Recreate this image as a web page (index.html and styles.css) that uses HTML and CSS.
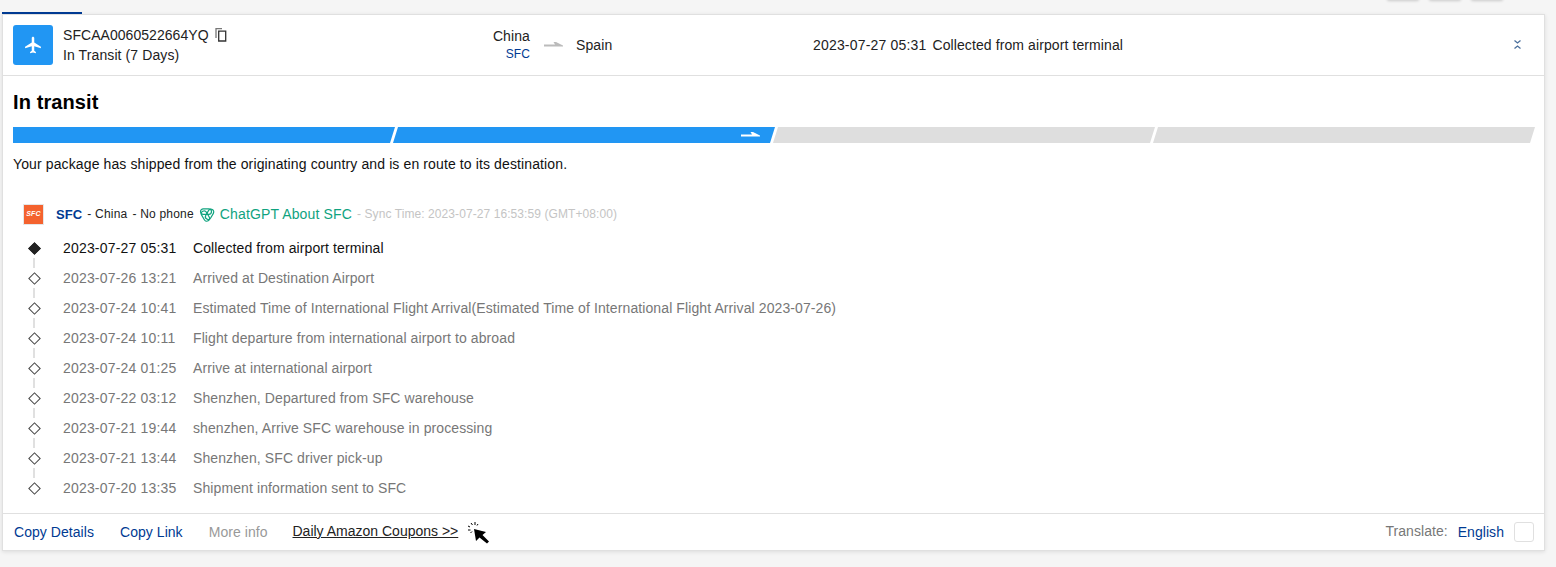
FILE: index.html
```html
<!DOCTYPE html>
<html>
<head>
  <meta charset="UTF-8">
  <meta name="viewport" content="width=device-width, initial-scale=1.0">
  <title>In transit</title>
  <link rel="stylesheet" href="styles.css">
</head>
<body>
  <div class="top-tabs">
    <span class="active-tab"></span>
    <span class="top-btns"><i></i><i></i><i></i></span>
  </div>
  <div class="card">
    <!-- resumo do pacote -->
    <div class="summary">
      <div class="plane-box">
        <svg width="20" height="20" viewBox="0 0 24 24"><path fill="#fff" d="M21 16v-2l-8-5V3.500C13 2.700 12.300 2 11.500 2S10 2.700 10 3.500V9l-8 5v2l8-2.500V19l-2 1.500V22l3.500-1 3.500 1v-1.500L13 19v-5.500z" transform="translate(.5 0)"/></svg>
      </div>
      <div class="number-col">
        <div class="number">SFCAA0060522664YQ
          <svg class="copy-icon" width="12" height="14" viewBox="0 0 12 14"><path fill="none" stroke="#777" stroke-width="1.300" d="M1 10V.7h6"/><path fill="none" stroke="#333" stroke-width="1.300" d="M3.700 3.200h7v9.800h-7z"/></svg>
        </div>
        <div class="days">In Transit (7 Days)</div>
      </div>
      <div class="origin">
        <div>China</div>
        <div class="carrier-link">SFC</div>
      </div>
      <svg class="route-arrow" width="20" height="6" viewBox="0 0 20 6"><path fill="#bbb" d="M0 2.500h11L9.500 0h2.500l7 3.500v1H0z"/></svg>
      <div class="dest">Spain</div>
      <div class="latest"><span class="latest-time">2023-07-27 05:31</span>Collected from airport terminal</div>
      <svg class="collapse" width="7" height="9" viewBox="0 0 7 9"><path fill="none" stroke="#4a6f9c" stroke-width="1.300" d="M.5.500l3 2.500 3-2.500M.5 8.500l3-2.500 3 2.500"/></svg>
    </div>

    <div class="content">
      <h2>In transit</h2>
      <div class="progress">
        <div class="step done"></div>
        <div class="step done">
          <svg class="step-arrow" width="20" height="6" viewBox="0 0 20 6"><path fill="#fff" d="M0 2.500h11L9.500 0h2.500l7 3.500v1H0z"/></svg>
        </div>
        <div class="step"></div>
        <div class="step"></div>
      </div>
      <p class="status-text">Your package has shipped from the originating country and is en route to its destination.</p>

      <div class="carrier">
        <div class="carrier-logo">SFC</div>
        <b class="carrier-name">SFC</b>
        <span class="carrier-info">- China</span>
        <span class="carrier-info">- No phone</span>
        <svg class="gpt-icon" width="16" height="16" viewBox="0 0 16 16" fill="none" stroke="#10a37f" stroke-width="1.200">
          <rect x="1.500" y="2.800" width="11" height="5.600" rx="2.800"/>
          <rect x="1.500" y="2.800" width="11" height="5.600" rx="2.800" transform="rotate(120 8 8)"/>
          <rect x="1.500" y="2.800" width="11" height="5.600" rx="2.800" transform="rotate(240 8 8)"/>
        </svg>
        <span class="gpt-link">ChatGPT About SFC</span>
        <span class="sync">- Sync Time: 2023-07-27 16:53:59 (GMT+08:00)</span>
      </div>

      <ul class="events" id="events"></ul>
    </div>

    <div class="footer">
      <a class="foot-link">Copy Details</a>
      <a class="foot-link">Copy Link</a>
      <a class="foot-link off">More info</a>
      <a class="coupons">Daily Amazon Coupons &gt;&gt;</a>
      <svg class="cursor" width="24" height="23" viewBox="0 0 24 23">
        <path d="M7 7l2 12 3.500-3.500 7.500 6 2-2-6.500-6.500 3.500-3z"/>
        <path fill="none" stroke="#000" d="M4 1l1.500 2M1 4l2 1M1 8h2.500M8 0v3M3.500 11l1.500-1.500M11 2l-1 1.500"/>
      </svg>
      <span class="translate">Translate:</span>
      <a class="foot-link lang">English</a>
      <span class="lang-box"></span>
    </div>
  </div>

  <script>
    // Lista de eventos do pacote
    const eventos = [
      ['2023-07-27 05:31', 'Collected from airport terminal'],
      ['2023-07-26 13:21', 'Arrived at Destination Airport'],
      ['2023-07-24 10:41', 'Estimated Time of International Flight Arrival(Estimated Time of International Flight Arrival 2023-07-26)'],
      ['2023-07-24 10:11', 'Flight departure from international airport to abroad'],
      ['2023-07-24 01:25', 'Arrive at international airport'],
      ['2023-07-22 03:12', 'Shenzhen, Departured from SFC warehouse'],
      ['2023-07-21 19:44', 'shenzhen, Arrive SFC warehouse in processing'],
      ['2023-07-21 13:44', 'Shenzhen, SFC driver pick-up'],
      ['2023-07-20 13:35', 'Shipment information sent to SFC']
    ];

    const lista = document.getElementById('events');
    eventos.forEach(([hora, texto]) => {
      const li = document.createElement('li');
      li.innerHTML = `<span class="dot"></span><span class="time">${hora}</span><span>${texto}</span>`;
      lista.appendChild(li);
    });
  </script>
</body>
</html>
```
FILE: styles.css
```css
* {
  box-sizing: border-box;
}
body {
  font-family: 'Liberation Sans', Arial, sans-serif;
  font-size: 14px;
  letter-spacing: 0.1px;
  margin: 0;
  background: #f5f5f5;
  color: #222;
  height: 567px;
  overflow: hidden;
}
.top-tabs {
  height: 14px;
  position: relative;
}
.active-tab {
  position: absolute;
  left: 2px;
  bottom: 0;
  width: 80px;
  height: 2px;
  background: #003a92;
}
.top-btns {
  position: absolute;
  left: 1387px;
  top: -8px;
  display: flex;
  gap: 10px;
}
.top-btns i {
  width: 32px;
  height: 8px;
  background: #f5f5f5;
  border-radius: 2px;
  box-shadow: 0 1px 3px rgba(0, 0, 0, 0.18);
}
.card {
  margin-left: 2px;
  width: 1543px;
  height: 537px;
  background: #fff;
  border: 1px solid #e0e0e0;
  box-shadow: 0 1px 4px rgba(0, 0, 0, 0.1);
}
.summary {
  height: 61px;
  border-bottom: 1px solid #e0e0e0;
  display: flex;
  align-items: center;
  padding-left: 10px;
  position: relative;
}
.plane-box {
  width: 40px;
  height: 40px;
  background: #2196f3;
  border-radius: 3px;
  display: flex;
  align-items: center;
  justify-content: center;
}
.number-col {
  width: 400px;
  margin-left: 10px;
  line-height: 20px;
}
.number {
  display: flex;
  align-items: center;
  gap: 6px;
  letter-spacing: 0.05px;
}
.origin {
  width: 67px;
  text-align: right;
}
.origin div:first-child {
  line-height: 18px;
}
.carrier-link {
  color: #003a92;
  font-size: 12px;
  line-height: 18px;
}
.route-arrow {
  margin: 0 12px 0 14px;
}
.dest {
  width: 237px;
}
.latest-time {
  margin-right: 6px;
  letter-spacing: 0.18px;
}
.collapse {
  position: absolute;
  left: 1511px;
  top: 25px;
}
.content {
  padding: 0 10px;
}
h2 {
  margin: 0;
  padding-top: 15px;
  font-size: 20px;
  line-height: 23px;
  color: #000;
}
.progress {
  display: flex;
  margin-top: 13px;
  width: 1522px;
}
.step {
  flex: 1;
  height: 16px;
  background: #dedede;
  clip-path: polygon(5px 0, 100% 0, calc(100% - 5px) 100%, 0 100%);
  position: relative;
  margin-right: -2px;
}
.step:first-child {
  clip-path: polygon(0 0, 100% 0, calc(100% - 5px) 100%, 0 100%);
}
.step:last-child {
  margin-right: 0;
}
.step.done {
  background: #2196f3;
}
.step-arrow {
  position: absolute;
  right: 14px;
  top: 5px;
}
.status-text {
  margin: 13px 0 0;
  line-height: 16px;
  color: #111;
  letter-spacing: 0.12px;
}
.carrier {
  display: flex;
  align-items: center;
  margin-top: 31px;
  margin-left: 10px;
  height: 22px;
}
.carrier-logo {
  width: 21px;
  height: 21px;
  background: #f4622e;
  border: 1px solid #e6e6e6;
  color: #fff;
  font-size: 7px;
  font-style: italic;
  font-weight: bold;
  text-align: center;
  line-height: 18px;
  margin-right: 12px;
}
.carrier-name {
  color: #003a92;
  font-size: 13px;
  margin-right: 5px;
}
.carrier-info {
  font-size: 12px;
  margin-right: 5px;
  letter-spacing: 0.2px;
}
.gpt-icon {
  margin-right: 5px;
}
.gpt-link {
  color: #10a37f;
  margin-right: 5px;
  letter-spacing: 0.15px;
}
.sync {
  color: #c4c4c4;
  font-size: 12px;
  letter-spacing: 0.08px;
}
.events {
  list-style: none;
  margin: 8px 0 0;
  padding: 0;
}
.events li {
  display: flex;
  align-items: center;
  height: 30px;
  color: #777;
  position: relative;
}
.events li:first-child {
  color: #111;
}
.events li:not(:last-child)::after {
  content: "";
  position: absolute;
  left: 20px;
  top: 25px;
  width: 2px;
  height: 10px;
  background: #e0e0e0;
}
.dot {
  width: 9px;
  height: 9px;
  margin-left: 16.500px;
  margin-right: 24.500px;
  border: 1.500px solid #444;
  background: #fff;
  transform: rotate(45deg);
}
.events li:first-child .dot {
  background: #222;
  border-color: #222;
}
.time {
  width: 130px;
  letter-spacing: 0.18px;
}
.footer {
  margin-top: 10px;
  height: 37px;
  border-top: 1px solid #e0e0e0;
  display: flex;
  align-items: center;
  padding: 0 10px 0 11px;
  letter-spacing: 0.05px;
}
.foot-link {
  color: #003a92;
  margin-right: 26px;
}
.foot-link.off {
  color: #999;
  margin-right: 25px;
}
.coupons {
  color: #222;
  text-decoration: underline;
  margin-top: -2px;
  letter-spacing: 0;
}
.cursor {
  margin-left: 9px;
  margin-top: 2px;
}
.translate {
  margin-left: auto;
  color: #777;
  margin-right: 10px;
  margin-top: -2px;
}
.foot-link.lang {
  margin-right: 10px;
}
.lang-box {
  width: 20px;
  height: 20px;
  border: 1px solid #e0e0e0;
  border-radius: 3px;
}
```
